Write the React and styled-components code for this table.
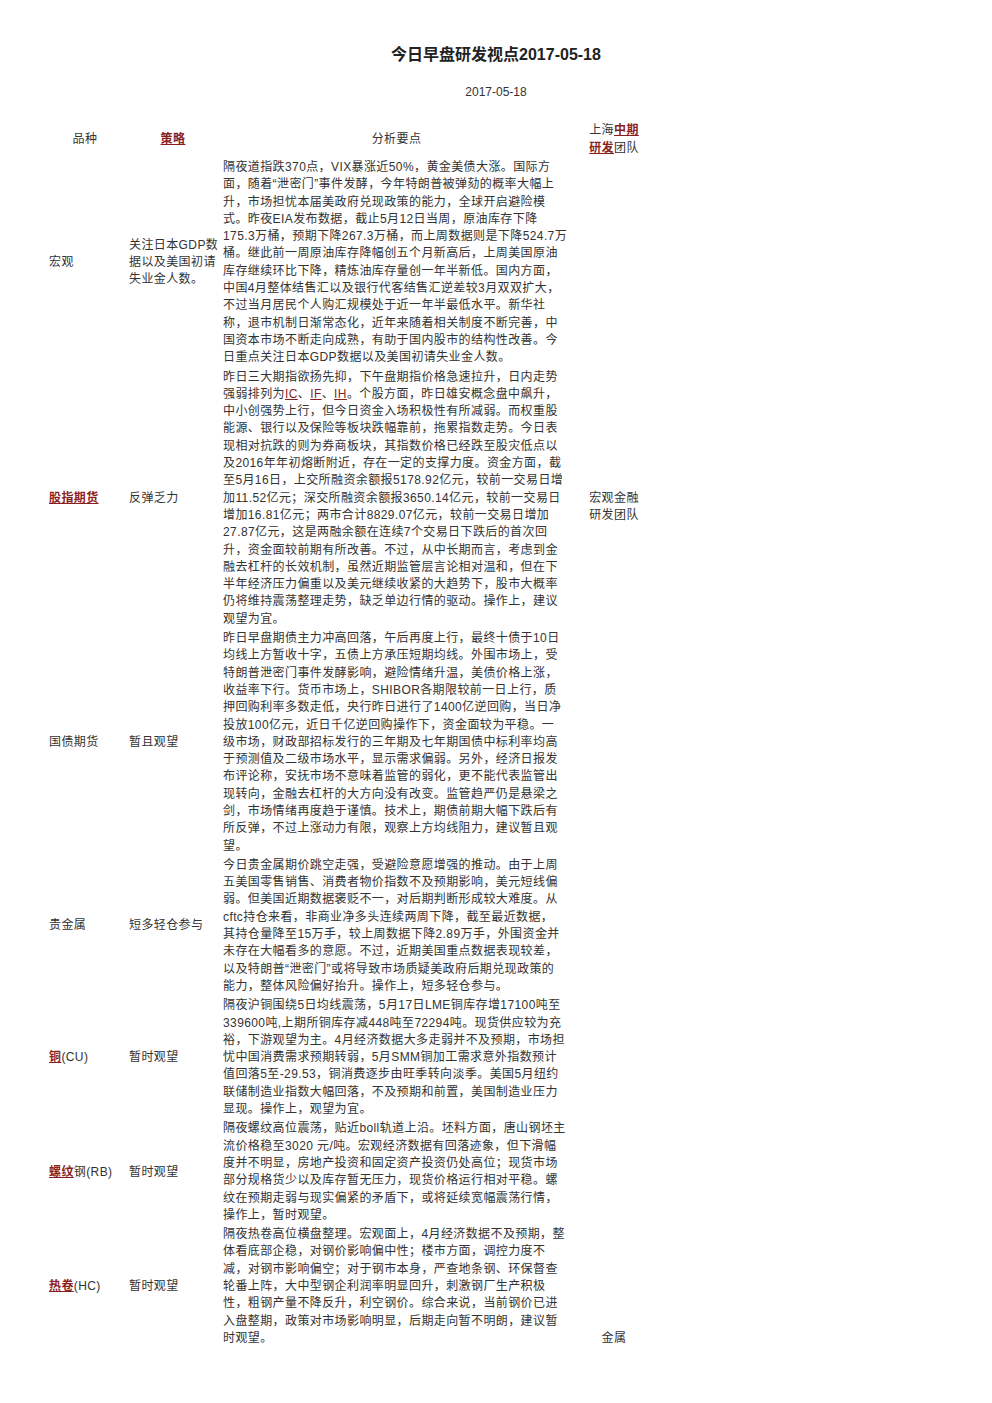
import React from "react";
import styled, { createGlobalStyle } from "styled-components";

const Global = createGlobalStyle`
  html, body { margin: 0; padding: 0; background: #fff; }
  body {
    font-family: "Liberation Sans", "Noto Sans CJK SC", sans-serif;
    color: #333;
  }
`;

const Page = styled.div`
  width: 992px;
  padding: 45px 0 40px 45px;
  box-sizing: border-box;
`;

const Title = styled.h1`
  margin: 0 0 0 -45px;
  width: 992px;
  text-align: center;
  font-size: 16px;
  line-height: 20px;
  font-weight: bold;
  color: #222;
`;

const DateLine = styled.div`
  margin: 19px 0 0 -45px;
  width: 992px;
  text-align: center;
  font-size: 12px;
  line-height: 16px;
  color: #333;
`;

const Table = styled.table`
  margin-top: 20px;
  border-collapse: collapse;
  table-layout: fixed;
  width: 611px;
  font-size: 12px;
  line-height: 17.3px;
  letter-spacing: 0.4px;
`;

const Col = styled.col`
  width: ${(p) => p.$w}px;
`;

const Th = styled.th`
  font-weight: normal;
  text-align: center;
  vertical-align: middle;
  padding: 1px 4px;
  line-height: 18px;
  color: #333;
`;

const Td = styled.td`
  vertical-align: ${(p) => p.$valign || "middle"};
  text-align: ${(p) => p.$align || "left"};
  padding: 1px ${(p) => (p.$tight ? "2px" : "4px")};
  color: #333;
`;

const Link = styled.a`
  color: #8a1f1f;
  text-decoration: underline;
  font-weight: ${(p) => (p.$plain ? "normal" : "bold")};
  cursor: pointer;
`;

const Line = styled.span`
  display: block;
  white-space: nowrap;
`;

const Lines = ({ lines }) => (
  <>
    {lines.map((l, i) => (
      <Line key={i}>{l}</Line>
    ))}
  </>
);

const rows = [
  {
    label: "宏观",
    strategy: ["关注日本GDP数", "据以及美国初请", "失业金人数。"],
    text: [
      "隔夜道指跌370点，VIX暴涨近50%，黄金美债大涨。国际方",
      "面，随着“泄密门”事件发酵，今年特朗普被弹劾的概率大幅上",
      "升，市场担忧本届美政府兑现政策的能力，全球开启避险模",
      "式。昨夜EIA发布数据，截止5月12日当周，原油库存下降",
      "175.3万桶，预期下降267.3万桶，而上周数据则是下降524.7万",
      "桶。继此前一周原油库存降幅创五个月新高后，上周美国原油",
      "库存继续环比下降，精炼油库存量创一年半新低。国内方面，",
      "中国4月整体结售汇以及银行代客结售汇逆差较3月双双扩大，",
      "不过当月居民个人购汇规模处于近一年半最低水平。新华社",
      "称，退市机制日渐常态化，近年来随着相关制度不断完善，中",
      "国资本市场不断走向成熟，有助于国内股市的结构性改善。今",
      "日重点关注日本GDP数据以及美国初请失业金人数。",
    ],
  },
  {
    label: <Link>股指期货</Link>,
    strategy: ["反弹乏力"],
    text: [
      "昨日三大期指欲扬先抑，下午盘期指价格急速拉升，日内走势",
      <>
        强弱排列为<Link $plain>IC</Link>、<Link $plain>IF</Link>、<Link $plain>IH</Link>。个股方面，昨日雄安概念盘中飙升，
      </>,
      "中小创强势上行，但今日资金入场积极性有所减弱。而权重股",
      "能源、银行以及保险等板块跌幅靠前，拖累指数走势。今日表",
      "现相对抗跌的则为券商板块，其指数价格已经跌至股灾低点以",
      "及2016年年初熔断附近，存在一定的支撑力度。资金方面，截",
      "至5月16日，上交所融资余额报5178.92亿元，较前一交易日增",
      "加11.52亿元；深交所融资余额报3650.14亿元，较前一交易日",
      "增加16.81亿元；两市合计8829.07亿元，较前一交易日增加",
      "27.87亿元，这是两融余额在连续7个交易日下跌后的首次回",
      "升，资金面较前期有所改善。不过，从中长期而言，考虑到金",
      "融去杠杆的长效机制，虽然近期监管层言论相对温和，但在下",
      "半年经济压力偏重以及美元继续收紧的大趋势下，股市大概率",
      "仍将维持震荡整理走势，缺乏单边行情的驱动。操作上，建议",
      "观望为宜。",
    ],
  },
  {
    label: "国债期货",
    strategy: ["暂且观望"],
    text: [
      "昨日早盘期债主力冲高回落，午后再度上行，最终十债于10日",
      "均线上方暂收十字，五债上方承压短期均线。外围市场上，受",
      "特朗普泄密门事件发酵影响，避险情绪升温，美债价格上涨，",
      "收益率下行。货币市场上，SHIBOR各期限较前一日上行，质",
      "押回购利率多数走低，央行昨日进行了1400亿逆回购，当日净",
      "投放100亿元，近日千亿逆回购操作下，资金面较为平稳。一",
      "级市场，财政部招标发行的三年期及七年期国债中标利率均高",
      "于预测值及二级市场水平，显示需求偏弱。另外，经济日报发",
      "布评论称，安抚市场不意味着监管的弱化，更不能代表监管出",
      "现转向，金融去杠杆的大方向没有改变。监管趋严仍是悬梁之",
      "剑，市场情绪再度趋于谨慎。技术上，期债前期大幅下跌后有",
      "所反弹，不过上涨动力有限，观察上方均线阻力，建议暂且观",
      "望。",
    ],
  },
  {
    label: "贵金属",
    strategy: ["短多轻仓参与"],
    text: [
      "今日贵金属期价跳空走强，受避险意愿增强的推动。由于上周",
      "五美国零售销售、消费者物价指数不及预期影响，美元短线偏",
      "弱。但美国近期数据褒贬不一，对后期判断形成较大难度。从",
      "cftc持仓来看，非商业净多头连续两周下降，截至最近数据，",
      "其持仓量降至15万手，较上周数据下降2.89万手，外围资金并",
      "未存在大幅看多的意愿。不过，近期美国重点数据表现较差，",
      "以及特朗普“泄密门”或将导致市场质疑美政府后期兑现政策的",
      "能力，整体风险偏好抬升。操作上，短多轻仓参与。",
    ],
  },
  {
    label: (
      <>
        <Link>铜</Link>(CU)
      </>
    ),
    strategy: ["暂时观望"],
    text: [
      "隔夜沪铜围绕5日均线震荡，5月17日LME铜库存增17100吨至",
      "339600吨,上期所铜库存减448吨至72294吨。现货供应较为充",
      "裕，下游观望为主。4月经济数据大多走弱并不及预期，市场担",
      "忧中国消费需求预期转弱，5月SMM铜加工需求意外指数预计",
      "值回落5至-29.53，铜消费逐步由旺季转向淡季。美国5月纽约",
      "联储制造业指数大幅回落，不及预期和前置，美国制造业压力",
      "显现。操作上，观望为宜。",
    ],
  },
  {
    label: (
      <>
        <Link>螺纹</Link>钢(RB)
      </>
    ),
    strategy: ["暂时观望"],
    text: [
      "隔夜螺纹高位震荡，贴近boll轨道上沿。坯料方面，唐山钢坯主",
      "流价格稳至3020 元/吨。宏观经济数据有回落迹象，但下滑幅",
      "度并不明显，房地产投资和固定资产投资仍处高位；现货市场",
      "部分规格货少以及库存暂无压力，现货价格运行相对平稳。螺",
      "纹在预期走弱与现实偏紧的矛盾下，或将延续宽幅震荡行情，",
      "操作上，暂时观望。",
    ],
  },
  {
    label: (
      <>
        <Link>热卷</Link>(HC)
      </>
    ),
    strategy: ["暂时观望"],
    text: [
      "隔夜热卷高位横盘整理。宏观面上，4月经济数据不及预期，整",
      "体看底部企稳，对钢价影响偏中性；楼市方面，调控力度不",
      "减，对钢市影响偏空；对于钢市本身，严查地条钢、环保督查",
      "轮番上阵，大中型钢企利润率明显回升，刺激钢厂生产积极",
      "性，粗钢产量不降反升，利空钢价。综合来说，当前钢价已进",
      "入盘整期，政策对市场影响明显，后期走向暂不明朗，建议暂",
      "时观望。",
    ],
  },
];

const teamCell = (i) => {
  if (i === 0)
    return (
      <Td rowSpan={3} $align="center">
        <Lines lines={["宏观金融", "研发团队"]} />
      </Td>
    );
  if (i === 3)
    return (
      <Td rowSpan={4} $align="center" $valign="bottom">
        金属
      </Td>
    );
  return null;
};

export default function App() {
  return (
    <>
      <Global />
      <Page>
        <Title>今日早盘研发视点2017-05-18</Title>
        <DateLine>2017-05-18</DateLine>
        <Table>
          <colgroup>
            <Col $w={80} />
            <Col $w={96} />
            <Col $w={351} />
            <Col $w={84} />
          </colgroup>
          <thead>
            <tr>
              <Th>品种</Th>
              <Th>
                <Link>策略</Link>
              </Th>
              <Th>分析要点</Th>
              <Th>
                <Line>
                  上海<Link>中期</Link>
                </Line>
                <Line>
                  <Link>研发</Link>团队
                </Line>
              </Th>
            </tr>
          </thead>
          <tbody>
            {rows.map((r, i) => (
              <tr key={i}>
                <Td>{r.label}</Td>
                <Td>
                  <Lines lines={r.strategy} />
                </Td>
                <Td $tight>
                  <Lines lines={r.text} />
                </Td>
                {teamCell(i)}
              </tr>
            ))}
          </tbody>
        </Table>
      </Page>
    </>
  );
}
